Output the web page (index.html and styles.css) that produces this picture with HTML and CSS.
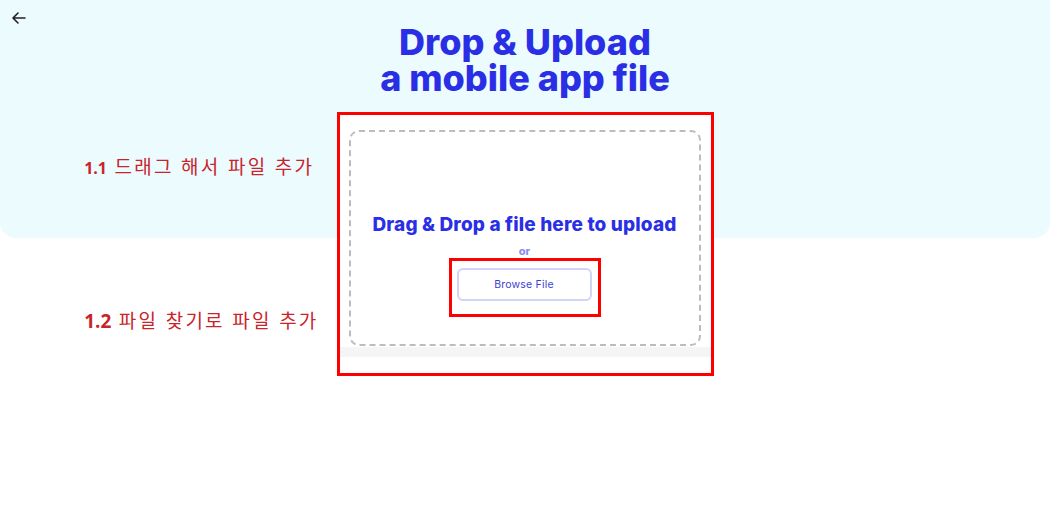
FILE: index.html
```html
<!DOCTYPE html>
<html lang="ko">
<head>
<meta charset="utf-8">
<title>Drop & Upload</title>
<link rel="stylesheet" href="styles.css">
</head>
<body>
<div class="page">
  <div class="hero-bg"></div>
  <button class="back" aria-label="Back">
    <svg width="14" height="12" viewBox="0 0 14 12"><path d="M13 6H1.5M6 1L1 6l5 5" fill="none" stroke="#222" stroke-width="1.6" stroke-linecap="round" stroke-linejoin="round"/></svg>
  </button>
  <h1 class="title"><span class="tl">Drop &amp; Upload</span><span class="tl">a mobile app file</span></h1>
  <div class="main">
    <div class="labels">
      <p class="label l1"><b class="num small">1.1</b> 드래그 해서 파일 추가</p>
      <p class="label l2"><b class="num">1.2</b> 파일 찾기로 파일 추가</p>
    </div>
    <div class="annot">
      <div class="card">
        <div class="drop">
          <div class="drop-title">Drag &amp; Drop a file here to upload</div>
          <div class="or">or</div>
          <div class="annot-btn">
            <button class="browse">Browse File</button>
          </div>
        </div>
      </div>
    </div>
    <div class="spacer"></div>
  </div>
</div>
</body>
</html>
```
FILE: styles.css
```css
* { box-sizing: border-box; }
html, body { margin: 0; padding: 0; background: #fff; }
body { width: 1050px; height: 512px; overflow: hidden; font-family: "Inter", sans-serif; }
.page { position: relative; width: 1050px; }
.hero-bg {
  position: absolute; left: 0; top: 0; width: 1050px; height: 238px;
  background: #ebfbfe; border-radius: 0 0 16px 16px; z-index: 0;
}
.back {
  position: absolute; left: 11px; top: 11px; width: 16px; height: 14px;
  padding: 0; border: 0; background: none; display: flex; align-items: center; justify-content: center; z-index: 2;
}
.title {
  position: relative; z-index: 1;
  margin: 0; padding-top: 24px;
  display: flex; flex-direction: column; align-items: center;
  color: #2a2fe6;
  font-family: "Inter", sans-serif; font-weight: 800;
  font-size: 36px; letter-spacing: 0;
}
.tl { display: block; height: 36px; line-height: 36px; }
.main {
  position: relative; z-index: 1;
  display: grid; grid-template-columns: 1fr auto 1fr;
  margin-top: 16px;
}
.labels {
  justify-self: end; margin-right: 18px;
  display: flex; flex-direction: column; gap: 128px; padding-top: 42px;
}
.label {
  margin: 0; color: #c9232b;
  font-family: "Noto Sans CJK KR", "Open Sans", sans-serif;
  font-size: 19px; line-height: 23px; font-weight: 400; letter-spacing: 2.2px;
  white-space: nowrap;
}
.num { font-family: "Open Sans", sans-serif; font-weight: 700; font-size: 19px; letter-spacing: 0; }
.num.small { font-size: 16px; }
.annot { border: 3px solid #ff0000; width: 377px; height: 264px; padding: 0 0 16px 0; }
.card {
  padding: 15px 10px 11px 9px; height: 100%;
  background: linear-gradient(#fff calc(100% - 10px), #f5f5f5 calc(100% - 10px));
}
.drop {
  height: 216px; border: 2px dashed #bcbcbc; border-radius: 10px; background: #fff;
  display: flex; flex-direction: column; align-items: center; padding-top: 82px;
}
.drop-title { color: #2a2fe6; font-weight: 800; font-size: 19px; line-height: 22px; letter-spacing: 0.15px; }
.or { color: #8a8ef0; font-weight: 800; font-size: 11px; line-height: 14px; margin-top: 8px; }
.annot-btn { border: 3px solid #ff0000; padding: 7px 6px 13px 5px; margin-top: 0; }
.browse {
  display: block; width: 135px; height: 33px; background: #fff;
  border: 2px solid #d2d4f7; border-radius: 6px;
  color: #3a3fd2; font-family: "Inter", sans-serif; font-size: 10.5px; letter-spacing: 0.2px;
}
```
